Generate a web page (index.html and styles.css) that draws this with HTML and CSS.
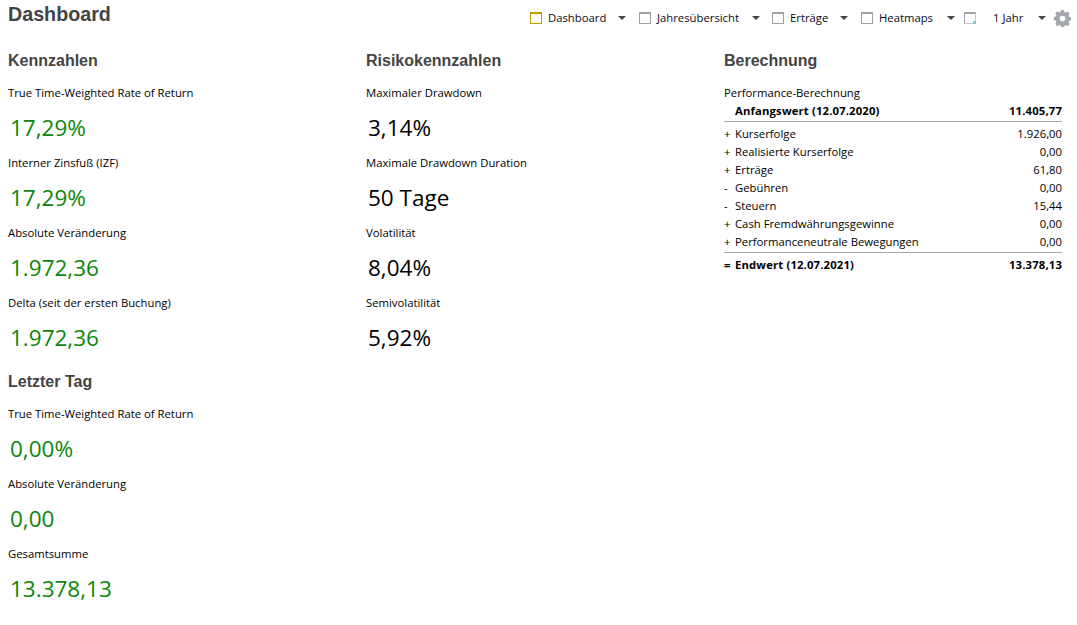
FILE: index.html
```html
<!DOCTYPE html>
<html lang="de">
<head>
  <meta charset="UTF-8">
  <title>Dashboard</title>
  <link rel="stylesheet" href="styles.css">
</head>
<body>

  <!-- Kopfzeile -->
  <header class="topbar">
    <h1 class="page-title">Dashboard</h1>
    <nav class="toolbar">
      <span class="tool tool-dashboard"><span class="win-icon win-active"></span><span class="tool-label">Dashboard</span><span class="caret"></span></span>
      <span class="tool tool-jahr"><span class="win-icon"></span><span class="tool-label">Jahresübersicht</span><span class="caret"></span></span>
      <span class="tool tool-ertraege"><span class="win-icon"></span><span class="tool-label">Erträge</span><span class="caret"></span></span>
      <span class="tool tool-heatmaps"><span class="win-icon"></span><span class="tool-label">Heatmaps</span><span class="caret"></span></span>
      <span class="tool tool-range"><span class="win-icon win-range"></span><span class="tool-label">1 Jahr</span><span class="caret"></span></span>
      <svg class="gear" width="17" height="17" viewBox="0 0 18 18">
        <path fill="#a3a7ad" fill-rule="evenodd" d="M7.400 0h3.200l.5 2.400 1.300.6 2.100-1.300 2.200 2.200-1.300 2.100.6 1.300 2.400.5v3.200l-2.400.5-.6 1.300 1.300 2.100-2.200 2.200-2.100-1.300-1.300.6-.5 2.400H7.400l-.5-2.400-1.300-.6-2.100 1.300-2.200-2.200 1.300-2.100-.6-1.300L-.4 10.600V7.400l2.400-.5.6-1.300-1.300-2.100 2.200-2.200 2.100 1.300 1.300-.6z M9 6a3 3 0 1 0 0 6 3 3 0 0 0 0-6z"/>
      </svg>
    </nav>
  </header>

  <main class="columns">
    <!-- linke Spalte -->
    <section class="col">
      <h2>Kennzahlen</h2>
      <div class="metric"><p class="metric-label">True Time-Weighted Rate of Return</p><p class="metric-value green">17,29%</p></div>
      <div class="metric"><p class="metric-label">Interner Zinsfuß (IZF)</p><p class="metric-value green">17,29%</p></div>
      <div class="metric"><p class="metric-label">Absolute Veränderung</p><p class="metric-value green">1.972,36</p></div>
      <div class="metric"><p class="metric-label">Delta (seit der ersten Buchung)</p><p class="metric-value green">1.972,36</p></div>

      <h2 class="second">Letzter Tag</h2>
      <div class="metric"><p class="metric-label">True Time-Weighted Rate of Return</p><p class="metric-value green">0,00%</p></div>
      <div class="metric"><p class="metric-label">Absolute Veränderung</p><p class="metric-value green">0,00</p></div>
      <div class="metric"><p class="metric-label">Gesamtsumme</p><p class="metric-value green">13.378,13</p></div>
    </section>

    <!-- mittlere Spalte -->
    <section class="col">
      <h2>Risikokennzahlen</h2>
      <div class="metric"><p class="metric-label">Maximaler Drawdown</p><p class="metric-value">3,14%</p></div>
      <div class="metric"><p class="metric-label">Maximale Drawdown Duration</p><p class="metric-value">50 Tage</p></div>
      <div class="metric"><p class="metric-label">Volatilität</p><p class="metric-value">8,04%</p></div>
      <div class="metric"><p class="metric-label">Semivolatilität</p><p class="metric-value">5,92%</p></div>
    </section>

    <!-- rechte Spalte -->
    <section class="col">
      <h2>Berechnung</h2>
      <p class="calc-title">Performance-Berechnung</p>
      <div class="calc-row bold ruled"><span class="sign"></span><span class="name">Anfangswert (12.07.2020)</span><span>11.405,77</span></div>
      <div class="calc-row"><span class="sign">+</span><span class="name">Kurserfolge</span><span>1.926,00</span></div>
      <div class="calc-row"><span class="sign">+</span><span class="name">Realisierte Kurserfolge</span><span>0,00</span></div>
      <div class="calc-row"><span class="sign">+</span><span class="name">Erträge</span><span>61,80</span></div>
      <div class="calc-row"><span class="sign">-</span><span class="name">Gebühren</span><span>0,00</span></div>
      <div class="calc-row"><span class="sign">-</span><span class="name">Steuern</span><span>15,44</span></div>
      <div class="calc-row"><span class="sign">+</span><span class="name">Cash Fremdwährungsgewinne</span><span>0,00</span></div>
      <div class="calc-row ruled"><span class="sign">+</span><span class="name">Performanceneutrale Bewegungen</span><span>0,00</span></div>
      <div class="calc-row bold"><span class="sign">=</span><span class="name">Endwert (12.07.2021)</span><span>13.378,13</span></div>
    </section>
  </main>

</body>
</html>
```

FILE: styles.css
```css
/* Gesamt */
body {
  margin: 0;
  background: #fff;
  color: #000;
  font-family: "Open Sans", "Noto Sans", sans-serif;
  font-size: 11.3px;
}
p, h1, h2 {
  margin: 0;
}

/* Kopfzeile */
.topbar {
  display: flex;
  justify-content: space-between;
  align-items: flex-start;
  height: 50px;
  padding: 0 6px 0 8px;
}
.page-title {
  margin-top: 4px;
  font-family: "Liberation Sans", Arial, sans-serif;
  font-size: 19.700px;
  line-height: 21px;
  font-weight: bold;
  color: #444;
}
.toolbar {
  display: flex;
  align-items: center;
  height: 18px;
  margin-top: 9px;
}
.tool {
  display: flex;
  align-items: center;
}
.tool-label {
  margin-left: 6px;
  line-height: 18px;
  color: #0a0a20;
}
.tool .caret {
  margin-left: auto;
}
.tool-dashboard { width: 109px; }
.tool-dashboard .caret { margin-right: 13px; }
.tool-jahr { width: 133px; }
.tool-jahr .caret { margin-right: 12px; }
.tool-ertraege { width: 89px; }
.tool-ertraege .caret { margin-right: 13px; }
.tool-heatmaps { width: 103px; }
.tool-heatmaps .caret { margin-right: 9px; }
.tool-range { width: 90px; }
.tool-range .caret { margin-right: 8px; }
.tool-range .tool-label { margin-left: 17px; }

.win-icon {
  box-sizing: border-box;
  display: block;
  position: relative;
  flex: none;
  width: 12px;
  height: 12px;
  border: 1px solid #a0a0a8;
  border-top-width: 2px;
}
.win-active {
  border-color: #c0a000;
}
.win-range {
  border-right-color: #c8c8cc;
  border-bottom-color: #c8c8cc;
}
.win-range::after {
  content: "";
  position: absolute;
  right: -1px;
  bottom: -1px;
  width: 3px;
  height: 3px;
  background: #8fc3d8;
}
.caret {
  width: 0;
  height: 0;
  border-left: 4px solid transparent;
  border-right: 4px solid transparent;
  border-top: 4px solid #444;
}
.gear {
  display: block;
}

/* Spalten */
.columns {
  display: grid;
  grid-template-columns: 358px 358px 338px;
  padding-left: 8px;
}
h2 {
  font-family: "Liberation Sans", Arial, sans-serif;
  font-size: 16px;
  line-height: 22px;
  font-weight: bold;
  color: #444;
}
h2.second {
  margin-top: 19px;
}

/* Kennzahlen */
.metric {
  height: 70px;
}
.metric-label {
  padding-top: 12px;
  line-height: 18px;
}
.metric-value {
  margin-top: 12px;
  padding-left: 2px;
  font-size: 22.500px;
  line-height: 28px;
}
.green {
  color: #0c860c;
}

/* Berechnung */
.calc-title {
  margin-top: 12px;
  line-height: 18px;
}
.calc-row {
  display: flex;
  height: 18px;
  line-height: 18px;
}
.calc-row .name {
  flex: 1;
}
.calc-row .sign {
  width: 11px;
}
.calc-row.bold {
  font-weight: 700;
  letter-spacing: 0.15px;
}
.calc-row.ruled {
  padding-bottom: 1px;
  margin-bottom: 3px;
  border-bottom: 1px solid #a8a8b0;
}
```
